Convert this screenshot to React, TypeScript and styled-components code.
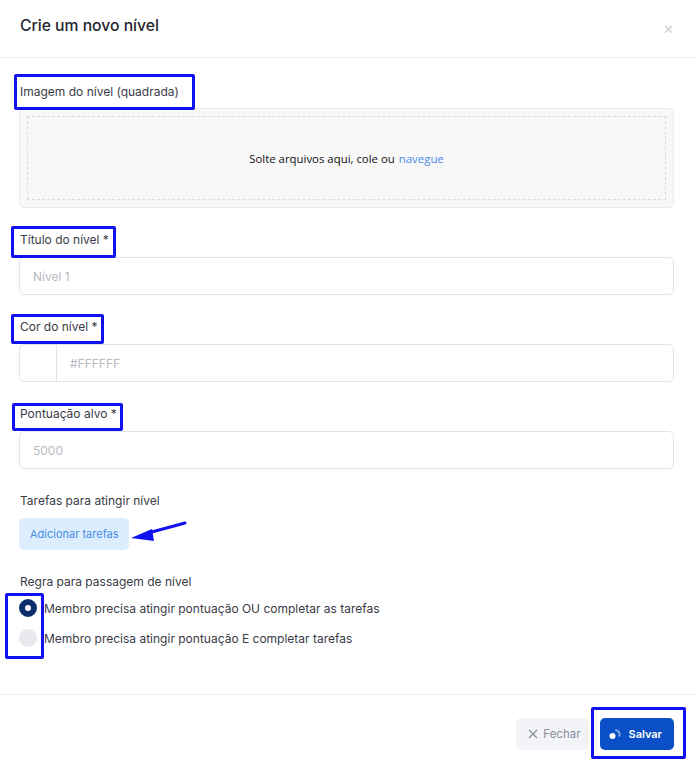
import React from 'react';
import styled, { createGlobalStyle } from 'styled-components';

const GlobalStyle = createGlobalStyle`
  body {
    margin: 0;
    background: #fff;
    font-family: Inter, "Noto Sans", sans-serif;
    color: #33343f;
  }
`;

const Modal = styled.div`
  position: relative;
  width: 696px;
  height: 770px;
  background: #fff;
  display: flex;
  flex-direction: column;
`;

const Header = styled.header`
  height: 58px;
  box-sizing: border-box;
  padding: 15px 20px 0;
  border-bottom: 1px solid #ececf1;
  display: flex;
  justify-content: space-between;
  align-items: flex-start;

  h1 {
    margin: 0;
    font-size: 15.7px;
    line-height: 22px;
    font-weight: 500;
    color: #25262f;
  }
`;

const CloseIcon = styled.span`
  color: #cfd0d6;
  font-size: 13px;
  line-height: 22px;
  margin-top: 3px;
  margin-right: 2px;
`;

const Body = styled.section`
  padding: 26px 22px 0 19px;
  flex: 1;
`;

const Field = styled.div`
  margin-bottom: 24px;
`;

const Label = styled.label`
  display: block;
  font-size: 12px;
  line-height: 16px;
  color: #3a3b46;
  margin-bottom: 9px;
  padding-left: 1px;
`;

const Dropzone = styled.div`
  height: 100px;
  box-sizing: border-box;
  background: #f8f8f9;
  border: 1px solid #ebebef;
  border-radius: 5px;
  padding: 7px;

  div {
    height: 100%;
    box-sizing: border-box;
    border: 1px dashed #dcdce0;
    display: flex;
    align-items: center;
    justify-content: center;
    font-family: "Open Sans", "Noto Sans", sans-serif;
    font-size: 11.4px;
    color: #111;
  }

  a {
    color: #4d8ae6;
    text-decoration: none;
    margin-left: 4px;
  }
`;

const Input = styled.div<{ $flatLeft?: boolean }>`
  flex: 1;
  height: 38px;
  box-sizing: border-box;
  border: 1px solid #e3e3eb;
  border-radius: ${(p) => (p.$flatLeft ? '0 5px 5px 0' : '5px')};
  padding: 0 13px;
  display: flex;
  align-items: center;
  font-size: 12px;
  color: #b9bac2;
`;

const ColorRow = styled.div`
  display: flex;
`;

const Swatch = styled.div`
  width: 37px;
  height: 38px;
  box-sizing: border-box;
  border: 1px solid #e3e3eb;
  border-right: none;
  border-radius: 5px 0 0 5px;
  background: #fff;
`;

const SoftButton = styled.button`
  height: 32px;
  padding: 0 10px 0 11px;
  border: none;
  border-radius: 5px;
  background: #dcedfe;
  color: #4a8de6;
  font-family: inherit;
  font-size: 11px;
`;

const RadioList = styled.div`
  display: flex;
  flex-direction: column;
  gap: 10px;
  margin-top: -1px;
`;

const RadioRow = styled.div`
  display: flex;
  align-items: center;
  height: 20px;
  font-size: 12px;
  color: #3a3b46;
`;

const RadioDot = styled.span<{ $checked?: boolean }>`
  width: 18px;
  height: 18px;
  border-radius: 50%;
  margin-right: 7px;
  box-sizing: border-box;
  background: ${(p) => (p.$checked ? '#fff' : '#e8e9ef')};
  border: ${(p) => (p.$checked ? '6px solid #0c2f6c' : 'none')};
`;

const Footer = styled.footer`
  border-top: 1px solid #ececf1;
  height: 76px;
  box-sizing: border-box;
  padding: 23px 22px 0;
  display: flex;
  justify-content: flex-end;
  gap: 11px;
`;

const FooterButton = styled.button<{ $primary?: boolean }>`
  height: 32px;
  box-sizing: border-box;
  border: none;
  border-radius: 5px;
  padding: ${(p) => (p.$primary ? '0 12px 0 8px' : '0 8px 0 12px')};
  display: flex;
  align-items: center;
  gap: ${(p) => (p.$primary ? '7px' : '5px')};
  font-family: inherit;
  font-size: ${(p) => (p.$primary ? '11px' : '11.5px')};
  font-weight: ${(p) => (p.$primary ? 600 : 400)};
  background: ${(p) => (p.$primary ? '#0a4fc6' : '#f2f4f7')};
  color: ${(p) => (p.$primary ? '#fff' : '#8b8f9b')};
`;

const Mark = styled.div`
  position: absolute;
  border: 3px solid #1111ee;
  border-radius: 2px;
  box-sizing: border-box;
  pointer-events: none;
`;

const ArrowSvg = styled.svg`
  position: absolute;
  left: 128px;
  top: 518px;
`;

const marks = [
  { x: 14, y: 74, w: 181, h: 36 },
  { x: 11, y: 226, w: 105, h: 32 },
  { x: 11, y: 314, w: 93, h: 30 },
  { x: 12, y: 403, w: 111, h: 28 },
  { x: 5, y: 593, w: 39, h: 66 },
  { x: 591, y: 707, w: 95, h: 52 },
];

const App = () => (
  <Modal>
    <GlobalStyle />
    <Header>
      <h1>Crie um novo nível</h1>
      <CloseIcon>✕</CloseIcon>
    </Header>
    <Body>
      <Field>
        <Label style={{ marginBottom: 8 }}>Imagem do nível (quadrada)</Label>
        <Dropzone>
          <div>
            Solte arquivos aqui, cole ou <a href="#">navegue</a>
          </div>
        </Dropzone>
      </Field>
      <Field>
        <Label>Título do nível *</Label>
        <Input>Nível 1</Input>
      </Field>
      <Field>
        <Label>Cor do nível *</Label>
        <ColorRow>
          <Swatch />
          <Input $flatLeft>#FFFFFF</Input>
        </ColorRow>
      </Field>
      <Field>
        <Label>Pontuação alvo *</Label>
        <Input>5000</Input>
      </Field>
      <Field>
        <Label>Tarefas para atingir nível</Label>
        <SoftButton>Adicionar tarefas</SoftButton>
      </Field>
      <Field>
        <Label>Regra para passagem de nível</Label>
        <RadioList>
          <RadioRow>
            <RadioDot $checked />
            Membro precisa atingir pontuação OU completar as tarefas
          </RadioRow>
          <RadioRow>
            <RadioDot />
            Membro precisa atingir pontuação E completar tarefas
          </RadioRow>
        </RadioList>
      </Field>
    </Body>
    <Footer>
      <FooterButton>
        <svg width="10" height="10" viewBox="0 0 10 10">
          <path d="M1 1L9 9M9 1L1 9" stroke="#8b8f9b" strokeWidth="1.3" />
        </svg>
        Fechar
      </FooterButton>
      <FooterButton $primary>
        <svg width="14" height="14" viewBox="0 0 14 14">
          <path d="M8 3.2a4 4 0 0 1 3.3 5.6" stroke="#7fa3e6" strokeWidth="2" fill="none" strokeLinecap="round" />
          <circle cx="4.5" cy="9" r="3" fill="#fff" />
        </svg>
        Salvar
      </FooterButton>
    </Footer>
    {marks.map((m, i) => (
      <Mark key={i} style={{ left: m.x, top: m.y, width: m.w, height: m.h }} />
    ))}
    <ArrowSvg width="62" height="28" viewBox="0 0 62 28">
      <path d="M57 5 L20 15" stroke="#1111ee" strokeWidth="3" strokeLinecap="round" />
      <path d="M3 20 L24 11 L26 23 Z" fill="#1111ee" />
    </ArrowSvg>
  </Modal>
);

export default App;
